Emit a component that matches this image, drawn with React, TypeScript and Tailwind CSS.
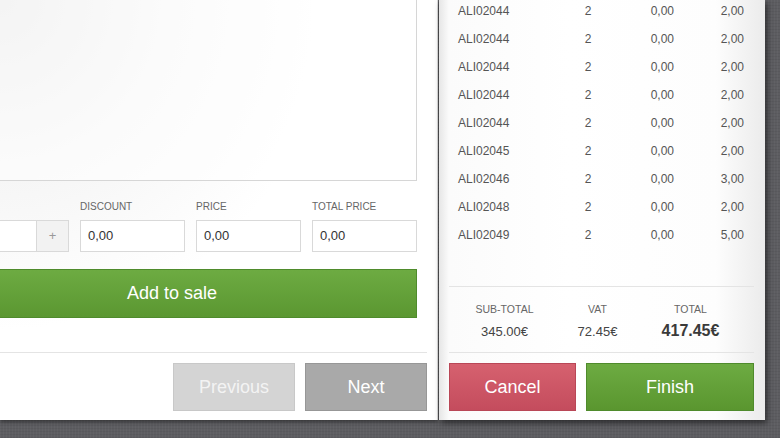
import React from "react";

const rows = [
  ["ALI02044", "2", "0,00", "2,00"],
  ["ALI02044", "2", "0,00", "2,00"],
  ["ALI02044", "2", "0,00", "2,00"],
  ["ALI02044", "2", "0,00", "2,00"],
  ["ALI02044", "2", "0,00", "2,00"],
  ["ALI02045", "2", "0,00", "2,00"],
  ["ALI02046", "2", "0,00", "3,00"],
  ["ALI02048", "2", "0,00", "2,00"],
  ["ALI02049", "2", "0,00", "5,00"],
];

const Field = ({ label, value }: { label: string; value: string }) => (
  <div className="flex flex-col w-[105px]">
    <span className="text-[10px] leading-none text-[#666] uppercase mb-[8px]">{label}</span>
    <div className="h-[32px] border border-[#d9d9d9] bg-white flex items-center pl-[7px] text-[13px] text-[#333]">
      {value}
    </div>
  </div>
);

const App = () => {
  return (
    <div
      className="w-[780px] h-[438px] overflow-hidden flex items-start bg-[#5d5d61] bg-[repeating-linear-gradient(90deg,rgba(255,255,255,0.03)_0px,rgba(255,255,255,0.03)_1px,transparent_1px,transparent_3px),repeating-linear-gradient(0deg,rgba(0,0,0,0.05)_0px,rgba(0,0,0,0.05)_1px,transparent_1px,transparent_3px)]"
      style={{ fontFamily: '"Liberation Sans", Arial, sans-serif' }}
    >
      {/* left panel */}
      <section className="w-[438px] h-[420px] shrink-0 flex flex-col border-r border-[#dcdcdc] bg-[radial-gradient(circle_at_0_0,#e3e3e3_0px,#f6f6f6_180px,#fff_330px)] shadow-[0_2px_4px_rgba(0,0,0,0.45)]">
        <div className="-ml-[73px] w-[490px] flex flex-col">
          <div className="h-[182px] -mt-px border border-[#d6d6d6] bg-white/60" />
          <div className="flex justify-end items-end gap-[11px] mt-[21px]">
            <div className="flex h-[32px] w-[140px]">
              <div className="flex-1 border border-[#d9d9d9] bg-white" />
              <div className="w-[32px] border border-l-0 border-[#d9d9d9] bg-[#f2f2f2] flex items-center justify-center text-[13px] text-[#999]">
                +
              </div>
            </div>
            <Field label="Discount" value="0,00" />
            <Field label="Price" value="0,00" />
            <Field label="Total price" value="0,00" />
          </div>
          <button className="mt-[17px] h-[49px] border border-[#4f8b2c] bg-[linear-gradient(#6dab42,#5b9731)] text-white text-[18px]">
            Add to sale
          </button>
        </div>
        <div className="mt-auto pr-[10px]">
          <div className="h-px bg-[#e4e4e4]" />
          <div className="flex justify-end gap-[10px] mt-[10px] mb-[9px]">
            <button className="w-[122px] h-[48px] border border-[#c8c8c8] bg-[#d4d4d4] text-[#f3f3f3] text-[18px]">
              Previous
            </button>
            <button className="w-[122px] h-[48px] border border-[#979797] bg-[#a9a9a9] text-white text-[18px]">
              Next
            </button>
          </div>
        </div>
      </section>

      {/* right panel */}
      <section className="w-[326px] h-[420px] ml-px shrink-0 flex flex-col pl-[10px] pr-[11px] bg-[linear-gradient(to_right,#e6e6e6_0px,#fbfbfb_10px,#fff_40%,#fdfdfd_85%,#ebebeb_100%)] shadow-[2px_3px_6px_rgba(0,0,0,0.55)]">
        <div className="-mt-[3px] px-[9px]">
          {rows.map((r, i) => (
            <div
              key={i}
              className="grid grid-cols-[100px_60px_56px_70px] h-[28px] items-center text-[12px] text-[#555]"
            >
              <span>{r[0]}</span>
              <span className="text-center">{r[1]}</span>
              <span className="text-right">{r[2]}</span>
              <span className="text-right">{r[3]}</span>
            </div>
          ))}
        </div>
        <div className="mt-auto">
          <div className="h-px bg-[#e4e4e4]" />
          <div className="grid grid-cols-[93px_93px_93px] px-[9px] pt-[17px] h-[65px] text-center">
            <div className="flex flex-col items-center">
              <span className="text-[10.5px] leading-none text-[#666]">SUB-TOTAL</span>
              <span className="text-[13px] text-[#444] mt-[10px] leading-none">345.00€</span>
            </div>
            <div className="flex flex-col items-center">
              <span className="text-[10.5px] leading-none text-[#666]">VAT</span>
              <span className="text-[13px] text-[#444] mt-[10px] leading-none">72.45€</span>
            </div>
            <div className="flex flex-col items-center">
              <span className="text-[10.5px] leading-none text-[#666]">TOTAL</span>
              <span className="text-[16px] font-bold text-[#3a3a3a] mt-[8px] leading-none">417.45€</span>
            </div>
          </div>
          <div className="h-px bg-[#e4e4e4]" />
          <div className="flex gap-[10px] mt-[10px] mb-[9px]">
            <button className="w-[127px] h-[48px] border border-[#b94757] bg-[linear-gradient(#d6616f,#c44c5d)] text-white text-[18px]">
              Cancel
            </button>
            <button className="flex-1 h-[48px] border border-[#4f8b2c] bg-[linear-gradient(#6dab42,#5a962f)] text-white text-[18px]">
              Finish
            </button>
          </div>
        </div>
      </section>
    </div>
  );
};

export default App;
